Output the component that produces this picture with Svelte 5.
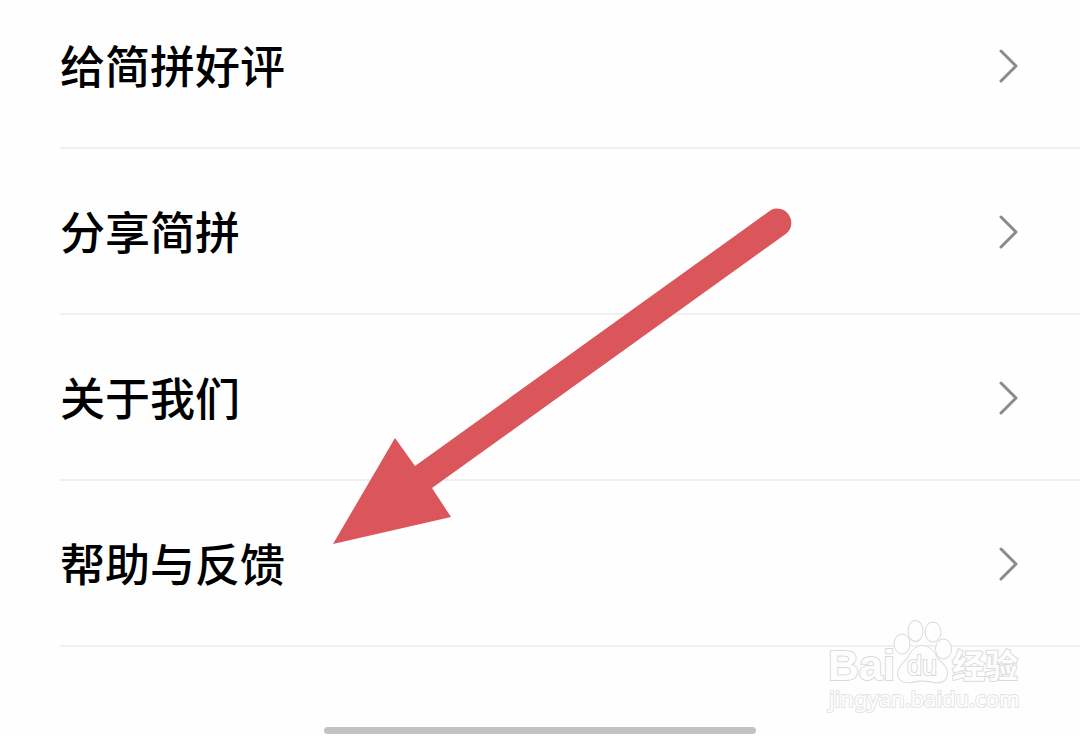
<script>
  const items = ['给简拼好评', '分享简拼', '关于我们', '帮助与反馈'];
</script>

<main>
  <nav aria-label="设置">
    <ul>
      {#each items as item}
        <li>
          <a href="#top">
            <span>{item}</span>
            <svg class="chevron" viewBox="0 0 20 36" aria-hidden="true">
              <path d="M2 4 17 19 2 34" />
            </svg>
          </a>
        </li>
      {/each}
    </ul>
  </nav>

  <div class="home"></div>

  <svg class="arrow" viewBox="0 0 460 338" aria-hidden="true">
    <path d="M0 337 62 231 82 259 438 3A14.200 14.200 0 0 1 454 26L99 281 118 310Z" />
  </svg>

  <svg class="mark" viewBox="0 0 200 100" aria-hidden="true">
    <g class="outline">
      <text class="brand" x="3" y="62">Bai</text>
      <ellipse cx="77" cy="26" rx="7.500" ry="9.500" />
      <ellipse cx="90.500" cy="13" rx="7" ry="10" />
      <ellipse cx="108" cy="14" rx="7.500" ry="9.500" />
      <ellipse cx="118.500" cy="31" rx="7.500" ry="9.500" />
      <path d="M97 28C105 28 109 34 112 40C115 45 122 47 122 55C122 64 114 65 108 64C101 62 93 62 87 64C80 65 73 63 73 55C74 47 80 45 83 40C86 34 90 28 97 28Z" />
      <text class="du" x="82" y="57">du</text>
      <text class="cn" x="127" y="60">经验</text>
      <text class="url" x="4" y="89">jingyan.baidu.com</text>
    </g>
  </svg>
</main>

<style>
  :global(body) {
    margin: 0;
    background: #fefefe;
  }

  main {
    position: relative;
    min-height: 100vh;
    overflow: hidden;
    display: flex;
    flex-direction: column;
    font-family: "Noto Sans CJK SC", sans-serif;
  }

  nav {
    margin-top: -17px;
  }

  ul {
    list-style: none;
    margin: 0;
    padding: 0 0 0 60px;
  }

  li {
    border-bottom: 2px solid #f0f0f0;
  }

  a {
    display: flex;
    align-items: center;
    justify-content: space-between;
    padding: 49px 61px 49px 0;
    color: #000;
    font-size: 45px;
    font-weight: 500;
    line-height: 66px;
    text-decoration: none;
  }

  .chevron {
    width: 20px;
    height: 36px;
    fill: none;
    stroke: #8b8b8b;
    stroke-width: 3;
    stroke-linecap: round;
    stroke-linejoin: round;
  }

  .home {
    width: 40%;
    height: 7px;
    margin: auto auto 2px;
    border-radius: 4px;
    background: #c3c3c3;
  }

  .arrow {
    position: absolute;
    left: 333px;
    top: 207px;
    width: 460px;
    height: 338px;
    fill: #da565b;
  }

  .mark {
    position: absolute;
    right: 55px;
    bottom: 18px;
    width: 200px;
    height: 100px;
    overflow: visible;
  }

  .outline {
    fill: #fefefe;
    stroke: #dadada;
    stroke-width: 2;
    paint-order: stroke;
  }

  .brand {
    font: 700 43px "Liberation Sans", sans-serif;
  }

  .du {
    font: 400 27px "Liberation Sans", sans-serif;
  }

  .cn {
    font: 700 33px "Noto Sans CJK SC", sans-serif;
  }

  .url {
    font: 400 22px "Noto Sans", sans-serif;
    stroke: #e4e4e4;
  }
</style>
